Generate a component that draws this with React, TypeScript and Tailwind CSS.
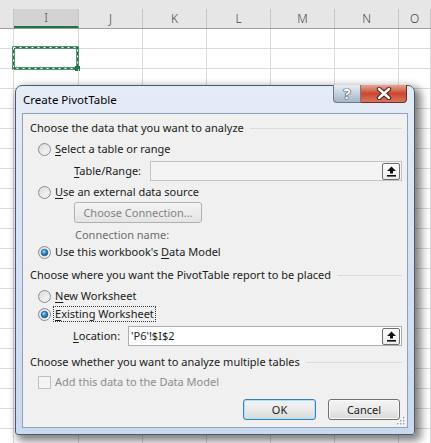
import React from "react";

const colWidths = [14, 65, 64, 64, 64, 64, 64, 32];
const colNames = ["", "I", "J", "K", "L", "M", "N", "O"];

function Radio({ checked }: { checked?: boolean }) {
  return (
    <svg width="13" height="13" viewBox="0 0 13 13" className="shrink-0">
      <defs>
        <linearGradient id="rbg" x1="0" y1="0" x2="1" y2="1">
          <stop offset="0" stopColor="#d6d6d6" />
          <stop offset="1" stopColor="#ffffff" />
        </linearGradient>
        <radialGradient id="rdot" cx="0.4" cy="0.35" r="0.7">
          <stop offset="0" stopColor="#9fdcfb" />
          <stop offset="0.5" stopColor="#2c8ed1" />
          <stop offset="1" stopColor="#0d4f84" />
        </radialGradient>
      </defs>
      <circle cx="6.5" cy="6.5" r="6" fill="url(#rbg)" stroke="#8a8a8a" strokeWidth="1" />
      <circle cx="6.5" cy="6.5" r="4.2" fill="none" stroke="#e8e8e8" strokeWidth="1" />
      {checked && <circle cx="6.5" cy="6.5" r="3.3" fill="url(#rdot)" stroke="#1d3f60" strokeWidth="0.6" />}
    </svg>
  );
}

function Key({ children }: { children: React.ReactNode }) {
  return <span className="underline underline-offset-2">{children}</span>;
}

function Section({ children }: { children: React.ReactNode }) {
  return (
    <div className="flex items-center h-4 pl-[7px] pr-[5px] gap-[6px]">
      <span className="whitespace-nowrap">{children}</span>
      <div className="flex-1 h-px bg-[#d5dde3]" />
    </div>
  );
}

function CollapseButton() {
  return (
    <div className="w-[18px] h-[17px] flex items-center justify-center bg-gradient-to-b from-white to-[#ececec] border border-[#6f6f6f] rounded-[2px]">
      <svg width="11" height="11" viewBox="0 0 11 11">
        <polygon points="5.5,0.5 10,5 7,5 7,7.5 4,7.5 4,5 1,5" fill="#111" />
        <rect x="1" y="9" width="9" height="1.6" fill="#111" />
      </svg>
    </div>
  );
}

function PushButton({ children, focused, width }: { children: React.ReactNode; focused?: boolean; width: string }) {
  return (
    <div
      className={`${width} h-[21px] flex items-center justify-center rounded-[3px] border bg-gradient-to-b from-[#f3f3f3] via-[#ebebeb] to-[#d8d8d8] ${
        focused ? "border-[#3c7fb1] shadow-[inset_0_0_0_1px_#a8e4fb]" : "border-[#707070] shadow-[inset_0_0_0_1px_#fbfbfb]"
      }`}
    >
      {children}
    </div>
  );
}

function Spreadsheet() {
  const rows = Array.from({ length: 21 }, (_, i) => i);
  return (
    <div className="w-[431px] h-[443px] overflow-hidden bg-white">
      <div className="h-[9px] bg-[#e6e6e6]" />
      <div className="flex h-[20px] bg-[#e6e6e6] border-b border-[#9f9f9f]">
        {colWidths.map((w, i) => (
          <div
            key={i}
            style={{ width: w }}
            className={`shrink-0 flex items-center justify-center text-[12px] font-light text-[#444] border-r border-[#c6c6c6] ${
              i === 1 ? "bg-[#d3d3d3] border-b-2 border-b-[#217346]" : ""
            }`}
          >
            {colNames[i]}
          </div>
        ))}
      </div>
      {rows.map((r) => (
        <div key={r} className="flex h-[20px] border-b border-[#dadada]">
          {colWidths.map((w, i) => (
            <div key={i} style={{ width: w }} className="shrink-0 relative border-r border-[#dadada]">
              {r === 1 && i === 1 && (
                <svg width="70" height="26" className="absolute left-[-3px] top-[-3px]">
                  <rect x="2.5" y="1.5" width="64" height="21" fill="none" stroke="#217346" strokeWidth="2.5" />
                  <rect x="2.5" y="1.5" width="64" height="21" fill="none" stroke="#ffffff" strokeWidth="1" strokeDasharray="2 4" />
                  <rect x="64" y="20" width="5" height="5" fill="#217346" />
                </svg>
              )}
            </div>
          ))}
        </div>
      ))}
    </div>
  );
}

function Dialog() {
  return (
    <div className="absolute left-[15px] top-[85px] w-[400px] h-[350px] flex flex-col border border-[#4e5a68] rounded-t-[7px] rounded-b-[3px] bg-gradient-to-b from-[#e4ecf6] via-[#d4e2f2] to-[#c9daee] shadow-[4px_4px_9px_2px_rgba(0,0,0,0.5)]">
      <div className="h-[27px] flex items-start shrink-0">
        <span className="mt-[5px] ml-[7px] text-[11.5px] text-black">Create PivotTable</span>
        <div className="ml-auto mr-[7px] flex -mt-px">
          <div className="w-[28px] h-[18px] flex items-center justify-center rounded-bl-[4px] border border-[#6b7b8c] border-t-0 bg-gradient-to-b from-[#e7edf3] via-[#c5d1dd] to-[#a6b6c6]">
            <span className="text-[15px] font-bold leading-none text-white [text-shadow:0_0_1px_#253545,0_0_1px_#253545,0_0_1px_#253545]">?</span>
          </div>
          <div className="w-[46px] h-[18px] flex items-center justify-center rounded-br-[4px] border border-l-0 border-[#7a2a22] border-t-0 bg-gradient-to-b from-[#e8a493] via-[#c9472f] to-[#d6755c]">
            <svg width="16" height="13" viewBox="0 0 16 13">
              <path d="M3 2 L13 11 M13 2 L3 11" stroke="#4a1a14" strokeWidth="4.4" strokeLinecap="round" />
              <path d="M3 2 L13 11 M13 2 L3 11" stroke="#ffffff" strokeWidth="2.6" strokeLinecap="round" />
            </svg>
          </div>
        </div>
      </div>
      <div className="relative mx-[6px] w-[386px] h-[315px] shrink-0 bg-[#f0f0f0] border border-[#8fa2ba] flex flex-col text-[11px] leading-4 text-[#1a1a1a]">
        <div className="mt-[6px]">
          <Section>Choose the data that you want to analyze</Section>
        </div>
        <div className="mt-[5px] h-4 flex items-center pl-[15px] gap-[4px]">
          <Radio />
          <span>
            <Key>S</Key>elect a table or range
          </span>
        </div>
        <div className="mt-[4px] h-[20px] flex items-center pl-[51px]">
          <span className="w-[76px] shrink-0">
            <Key>T</Key>able/Range:
          </span>
          <div className="w-[252px] h-[20px] flex items-center justify-end pr-[1px] bg-[#f4f4f4] border border-[#c3c3c3]">
            <CollapseButton />
          </div>
        </div>
        <div className="mt-[3px] h-4 flex items-center pl-[15px] gap-[4px]">
          <Radio />
          <span>
            <Key>U</Key>se an external data source
          </span>
        </div>
        <div className="mt-[2px] ml-[51px] w-[128px] h-[21px] flex items-center justify-center rounded-[3px] border border-[#adb2b5] bg-gradient-to-b from-[#f4f4f4] to-[#e4e4e4] text-[#838383]">
          Choose Connection...
        </div>
        <div className="mt-[4px] h-4 pl-[52px] text-[#6d6d6d]">Connection name:</div>
        <div className="mt-[1px] h-4 flex items-center pl-[15px] gap-[4px]">
          <Radio checked />
          <span>
            Use this workbook's <Key>D</Key>ata Model
          </span>
        </div>
        <div className="mt-[7px]">
          <Section>Choose where you want the PivotTable report to be placed</Section>
        </div>
        <div className="mt-[5px] h-4 flex items-center pl-[15px] gap-[4px]">
          <Radio />
          <span>
            <Key>N</Key>ew Worksheet
          </span>
        </div>
        <div className="mt-[2px] h-4 flex items-center pl-[15px] gap-[2px]">
          <Radio checked />
          <span className="px-[1px] border border-dotted border-[#333] leading-[14px]">
            <Key>E</Key>xisting Worksheet
          </span>
        </div>
        <div className="mt-[4px] h-[20px] flex items-center pl-[50px]">
          <span className="w-[55px] shrink-0">
            <Key>L</Key>ocation:
          </span>
          <div className="w-[274px] h-[20px] flex items-center justify-between pl-[2px] pr-[1px] bg-white border border-[#abadb3]">
            <span>'P6'!$I$2</span>
            <CollapseButton />
          </div>
        </div>
        <div className="mt-[8px]">
          <Section>Choose whether you want to analyze multiple tables</Section>
        </div>
        <div className="mt-[4px] h-4 flex items-center pl-[15px] gap-[4px]">
          <div className="w-[13px] h-[13px] shrink-0 border border-[#c0c0c0] bg-[#f4f4f4]" />
          <span className="text-[#8d8d8d]">Add this data to the Data Model</span>
        </div>
        <div className="mt-[9px] flex justify-end pr-[7px] gap-[12px]">
          <PushButton focused width="w-[73px]">OK</PushButton>
          <PushButton width="w-[72px]">Cancel</PushButton>
        </div>
        <svg width="10" height="10" viewBox="0 0 10 10" className="absolute right-[1px] bottom-[1px]">
          {[
            [8, 2],
            [8, 5],
            [5, 5],
            [8, 8],
            [5, 8],
            [2, 8],
          ].map(([x, y], i) => (
            <g key={i}>
              <rect x={x} y={y} width="1.5" height="1.5" fill="#ffffff" />
              <rect x={x - 1} y={y - 1} width="1.5" height="1.5" fill="#9aa8b8" />
            </g>
          ))}
        </svg>
      </div>
    </div>
  );
}

export default function App() {
  return (
    <div className="relative w-[431px] h-[443px] overflow-hidden font-['Noto_Sans',sans-serif]">
      <Spreadsheet />
      <Dialog />
    </div>
  );
}
